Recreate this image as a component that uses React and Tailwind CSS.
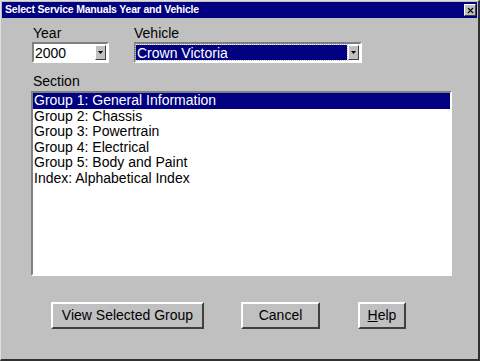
import { X } from "lucide-react";

const sunken =
  "border-t-[#808080] border-l-[#808080] border-b-white border-r-white border-2";

const DropBtn = () => (
  <div className="w-[11px] h-[15px] bg-[#c0c0c0] border border-t-white border-l-white border-b-[#404040] border-r-[#404040] flex items-center justify-center">
    <svg width="5" height="3" viewBox="0 0 5 3">
      <path d="M0 0h5L2.5 3z" fill="#000" />
    </svg>
  </div>
);

const Button = ({ children, className = "" }) => (
  <div
    className={`h-[27px] flex items-center justify-center bg-[#c0c0c0] border-t-2 border-l-2 border-t-white border-l-white border-b-2 border-r-2 border-b-[#404040] border-r-[#404040] text-[14px] text-black ${className}`}
  >
    {children}
  </div>
);

const sections = [
  "Group 1: General Information",
  "Group 2: Chassis",
  "Group 3: Powertrain",
  "Group 4: Electrical",
  "Group 5: Body and Paint",
  "Index: Alphabetical Index",
];

export default function App() {
  return (
    <div
      className="w-[480px] h-[361px] bg-[#c0c0c0] border-t border-l border-t-[#dfdfdf] border-l-[#dfdfdf] border-r-2 border-b-2 border-r-[#303030] border-b-[#303030] p-[1px] flex flex-col"
      style={{ fontFamily: '"Liberation Sans", Arial, sans-serif' }}
    >
      {/* title bar */}
      <div className="h-[16px] bg-[#000080] flex items-center justify-between pl-[3px] pr-[1px]">
        <span className="text-white font-bold text-[10.5px] tracking-[-0.2px]">
          Select Service Manuals Year and Vehicle
        </span>
        <div className="w-[12px] h-[12px] bg-[#c0c0c0] border border-t-white border-l-white border-b-[#404040] border-r-[#404040] flex items-center justify-center">
          <X className="w-[9px] h-[9px] text-black" strokeWidth={3} />
        </div>
      </div>

      <div className="flex-1 pl-[29px] pr-[26px] pt-[7px]">
        <div className="flex gap-[25px] text-[14px] text-black">
          <div className="flex flex-col">
            <span className="leading-[16px] pl-[2px]">Year</span>
            <div className={`mt-[1px] ml-[1px] w-[77px] h-[21px] bg-white flex items-center justify-between pr-[1px] ${sunken}`}>
              <span className="pl-[1px] leading-none">2000</span>
              <DropBtn />
            </div>
          </div>
          <div className="flex flex-col">
            <span className="leading-[16px]">Vehicle</span>
            <div className={`mt-[1px] w-[228px] h-[21px] bg-white flex items-center justify-between pr-[1px] ${sunken}`}>
              <div className="flex-1 h-[15px] mr-[1px] bg-[#000080] outline-1 outline-dotted outline-[#c0c0c0] flex items-center pl-[1px]">
                <span className="text-white leading-none">Crown Victoria</span>
              </div>
              <DropBtn />
            </div>
          </div>
        </div>

        <div className="mt-[10px] pl-[2px] text-[14px] leading-[16px] text-black">Section</div>
        <div className={`mt-[2px] w-[421px] h-[185px] bg-white ${sunken} border-t-[#404040] border-l-[#404040] border-b-[#dfdfdf] border-r-[#dfdfdf]`}>
          <div className="flex flex-col text-[14px] text-black">
            {sections.map((s, i) => (
              <div
                key={s}
                className={`h-[15.5px] leading-[15.5px] pl-[1px] ${i === 0 ? "bg-[#000080] text-white" : ""}`}
              >
                {s}
              </div>
            ))}
          </div>
        </div>

        <div className="mt-[26px] flex">
          <Button className="ml-[20px] w-[153px] border-[#000] border-t-[#000] border-l-[#000]">
            View Selected Group
          </Button>
          <Button className="ml-[37px] w-[79px]">Cancel</Button>
          <Button className="ml-[38px] w-[48px]">
            <span>
              <span className="underline">H</span>elp
            </span>
          </Button>
        </div>
      </div>
    </div>
  );
}
